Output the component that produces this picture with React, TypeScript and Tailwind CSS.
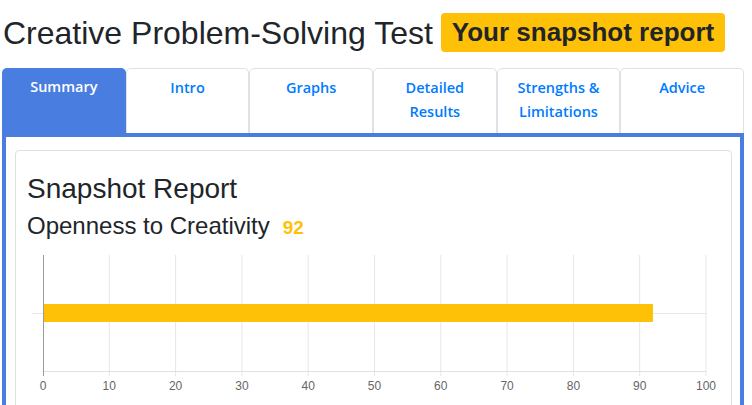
import React from 'react'

const tabs = [
  { label: 'Summary', active: true },
  { label: 'Intro' },
  { label: 'Graphs' },
  { label: 'Detailed Results', lines: ['Detailed', 'Results'] },
  { label: 'Strengths & Limitations', lines: ['Strengths &', 'Limitations'] },
  { label: 'Advice' },
]

function Chart({ value }: { value: number }) {
  // chart coordinates: x0 = 0 mark, step = width of 10 units
  const x0 = 27
  const step = 66.3
  const ticks = [0, 10, 20, 30, 40, 50, 60, 70, 80, 90, 100]
  return (
    <svg width="715" height="170" className="block" style={{ fontFamily: '"Liberation Sans", Arial, sans-serif' }}>
      {ticks.slice(1).map((t, i) => (
        <line key={t} x1={x0 + (i + 1) * step} x2={x0 + (i + 1) * step} y1="14" y2="135" stroke="#e6e6e6" strokeWidth="1" />
      ))}
      <line x1="16" x2={x0 + 10 * step} y1="72.5" y2="72.5" stroke="#e6e6e6" strokeWidth="1" />
      <line x1={x0} x2={x0 + 10 * step} y1="130.5" y2="130.5" stroke="#e0e0e0" strokeWidth="1" />
      <line x1={x0 + 0.5} x2={x0 + 0.5} y1="14" y2="135" stroke="#9a9a9a" strokeWidth="1" />
      <rect x={x0 + 1} y="63" width={(value / 10) * step - 1} height="18" fill="#ffc107" />
      {ticks.map((t, i) => (
        <text key={t} x={x0 + i * step} y="149" textAnchor="middle" fontSize="12" fill="#666">
          {t}
        </text>
      ))}
    </svg>
  )
}

export default function App(): React.ReactElement {
  return (
    <div className="w-[752px] h-[405px] overflow-hidden bg-white text-[#212529]" style={{ fontFamily: '"Liberation Sans", Arial, sans-serif' }}>
      {/* Header */}
      <div className="flex items-center h-[39px] mt-[13px] mb-[16px] pl-[3px]">
        <h1 className="text-[32px] leading-none font-normal">Creative Problem-Solving Test</h1>
        <span className="ml-[8px] h-[39px] px-[11px] flex items-center bg-[#ffc107] rounded-[4px] text-[26px] font-bold">
          Your snapshot report
        </span>
      </div>

      <div className="w-[742px] ml-[2px]">
        {/* Tab bar */}
        <div className="grid grid-cols-6 h-[65px]" style={{ fontFamily: '"Open Sans", sans-serif' }}>
          {tabs.map((tab) => (
            <div
              key={tab.label}
              className={`rounded-t-[5px] text-center text-[14.5px] font-semibold leading-[24px] pt-[7px] ${
                tab.active ? 'bg-[#4a7de0] text-white' : 'border border-b-0 border-[#dee2e6] text-[#007bff]'
              }`}
            >
              {tab.lines ? tab.lines.map((l) => <div key={l}>{l}</div>) : tab.label}
            </div>
          ))}
        </div>

        {/* Tab content */}
        <div className="border-4 border-[#4a7de0] pl-[9px] pr-[8px] pt-[13px] h-[300px]">
          <div className="border border-[#dfdfdf] rounded-[4px] h-[300px]">
            <div className="pt-[21px] pl-[11px]">
              <h3 className="text-[28px] leading-[1.2] font-normal">Snapshot Report</h3>
              <div className="mt-[6px] flex items-baseline h-[29px]">
                <h4 className="text-[24px] leading-[1.2] font-normal">Openness to Creativity</h4>
                <span className="ml-[13px] text-[19px] font-bold text-[#ffc107]">92</span>
              </div>
            </div>
            <Chart value={92} />
          </div>
        </div>
      </div>
    </div>
  )
}
